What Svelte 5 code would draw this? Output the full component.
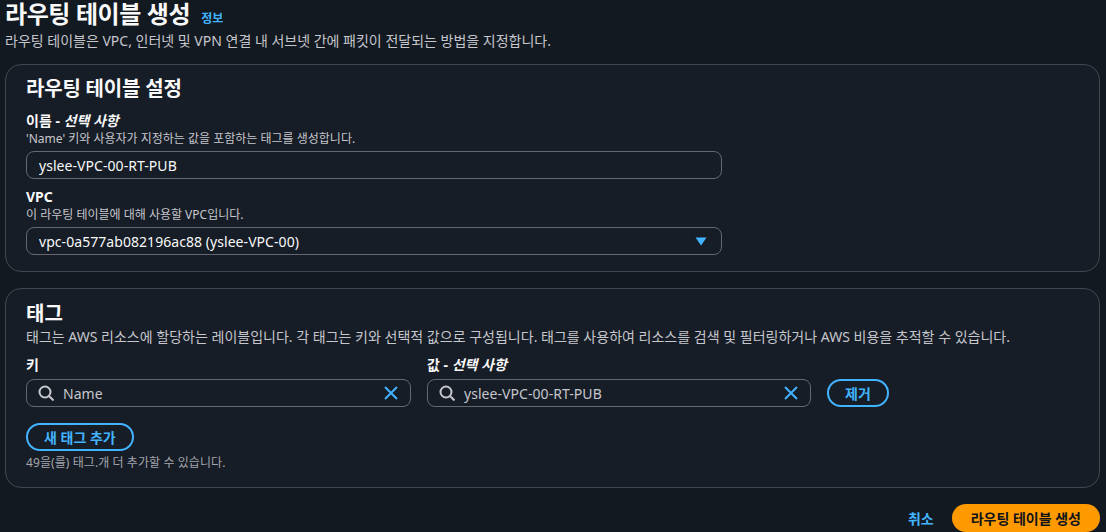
<script>
  const hint = "태그는 AWS 리소스에 할당하는 레이블입니다. 각 태그는 키와 선택적 값으로 구성됩니다. 태그를 사용하여 리소스를 검색 및 필터링하거나 AWS 비용을 추적할 수 있습니다.";
  const tags = [
    { label: "키", value: "Name", width: "key" },
    { label: "값 - ", em: "선택 사항", value: "yslee-VPC-00-RT-PUB", width: "val" }
  ];
</script>

<main class="page">
  <header class="head">
    <div class="titlebar"><h1>라우팅 테이블 생성</h1><a class="info" href="#a">정보</a></div>
    <p class="lead">라우팅 테이블은 VPC, 인터넷 및 VPN 연결 내 서브넷 간에 패킷이 전달되는 방법을 지정합니다.</p>
  </header>

  <section class="card first">
    <h2>라우팅 테이블 설정</h2>
    <div class="field name">
      <div class="label">이름 - <em>선택 사항</em></div>
      <div class="desc">'Name' 키와 사용자가 지정하는 값을 포함하는 태그를 생성합니다.</div>
      <div class="box wide"><span>yslee-VPC-00-RT-PUB</span></div>
    </div>
    <div class="field vpc">
      <div class="label">VPC</div>
      <div class="desc">이 라우팅 테이블에 대해 사용할 VPC입니다.</div>
      <div class="box wide select">
        <span>vpc-0a577ab082196ac88 (yslee-VPC-00)</span>
        <svg width="12" height="9" viewBox="0 0 12 9"><path d="M0.5 0.5h11L6 8.5z" fill="#42b4ff"/></svg>
      </div>
    </div>
  </section>

  <section class="card second">
    <h2>태그</h2>
    <p class="hint">{hint}</p>
    <div class="tagrow">
      {#each tags as t}
        <div class="tagcol {t.width}">
          <div class="label">{t.label}{#if t.em}<em>{t.em}</em>{/if}</div>
          <div class="box search">
            <svg class="glass" width="16" height="16" viewBox="0 0 16 16" fill="none" stroke="#c6c6cd" stroke-width="2"><circle cx="7" cy="7" r="5.5"/><path d="M11 11l4.5 4.5"/></svg>
            <span class="sv">{t.value}</span>
            <svg class="x" width="16" height="16" viewBox="0 0 16 16" fill="none" stroke="#42b4ff" stroke-width="2"><path d="M2 2l12 12M14 2L2 14"/></svg>
          </div>
        </div>
      {/each}
      <button class="outline remove">제거</button>
    </div>
    <button class="outline add">새 태그 추가</button>
    <div class="desc muted">49을(를) 태그.개 더 추가할 수 있습니다.</div>
  </section>

  <footer class="actions">
    <a class="cancel" href="#a">취소</a>
    <button class="primary">라우팅 테이블 생성</button>
  </footer>
</main>

<style>
  :global(body) {
    margin: 0;
    background: #131920;
    overflow: hidden;
  }
  .page {
    box-sizing: border-box;
    width: 1106px;
    height: 532px;
    overflow: hidden;
    padding: 0 6px 0 5px;
    font-family: "Noto Sans", "Noto Sans CJK KR", sans-serif;
    font-size: 14px;
    color: #c6c6cd;
  }
  .head { height: 64px; }
  .titlebar { display: flex; align-items: baseline; gap: 12px; height: 28px; }
  h1 { margin: 0; font-size: 24px; line-height: 28px; font-weight: 700; color: #f9f9fa; letter-spacing: -0.4px; }
  .info { font-size: 12px; font-weight: 700; color: #42b4ff; text-decoration: none; margin-left: -1px; }
  .lead { margin: 3px 0 0; font-size: 14px; line-height: 20px; }
  .card {
    box-sizing: border-box;
    background: #161d26;
    border: 1px solid #424650;
    border-radius: 16px;
    padding: 11px 20px 0;
  }
  .first { height: 208px; }
  .second { height: 200px; margin-top: 16px; }
  h2 { margin: 0; font-size: 20px; line-height: 26px; font-weight: 700; color: #f9f9fa; letter-spacing: -0.2px; }
  .second h2 { letter-spacing: 0; position: relative; top: 1px; }
  .label { font-size: 14px; line-height: 20px; font-weight: 700; color: #f9f9fa; }
  .label em { font-style: italic; }
  .desc { font-size: 12px; line-height: 16px; color: #c6c6cd; }
  .field.name { margin-top: 9px; }
  .field.vpc { margin-top: 8px; }
  .box {
    box-sizing: border-box;
    height: 28px;
    display: flex;
    align-items: center;
    border: 1px solid #656871;
    border-radius: 8px;
    padding: 0 12px;
    color: #f9f9fa;
    font-size: 14px;
    letter-spacing: 0.055px;
    background: #161d26;
  }
  .field .box { margin-top: 4px; }
  .wide { width: 696px; }
  .select { justify-content: space-between; padding-right: 14px; }
  .hint { margin: 1px 0 0; line-height: 20px; font-size: 14px; letter-spacing: 0.01px; }
  .tagrow { display: flex; align-items: flex-end; gap: 16px; margin-top: 8px; }
  .tagcol .label { margin-bottom: 4px; }
  .key { width: 385px; }
  .val { width: 384px; }
  .search { padding: 0 11px; gap: 9px; }
  .sv { flex: 1; color: #c6c6cd; }
  .outline {
    box-sizing: border-box;
    height: 28px;
    border: 2px solid #42b4ff;
    border-radius: 14px;
    background: transparent;
    color: #42b4ff;
    font: 700 14px "Noto Sans", "Noto Sans CJK KR", sans-serif;
    padding: 0 16px;
  }
  .add { display: block; margin-top: 16px; }
  .muted { margin-top: 3px; color: #a4a4ad; letter-spacing: 0.08px; line-height: 18px; }
  .actions { display: flex; justify-content: flex-end; align-items: center; gap: 18px; margin-top: 16px; }
  .cancel { color: #42b4ff; font-weight: 700; text-decoration: none; }
  .primary {
    height: 28px;
    border: 0;
    border-radius: 14px;
    background: #ff9900;
    color: #0f141a;
    font: 700 14px "Noto Sans", "Noto Sans CJK KR", sans-serif;
    padding: 0 19px;
  }
</style>
